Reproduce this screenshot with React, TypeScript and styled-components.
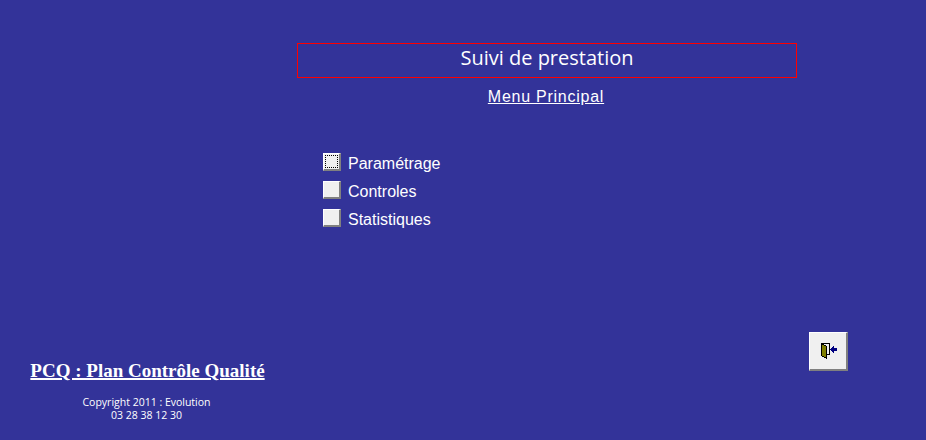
import React from "react";
import styled, { createGlobalStyle } from "styled-components";

const Global = createGlobalStyle`
  html, body { margin: 0; padding: 0; background: #333399; }
`;

const Page = styled.div`
  width: 926px;
  height: 440px;
  background: #333399;
  color: #fff;
  overflow: hidden;
  display: flex;
  flex-direction: column;
  font-family: "Liberation Sans", Arial, sans-serif;
`;

const Main = styled.div`
  flex: 1;
  padding: 43px 0 0 297px;
`;

const TitleBox = styled.div`
  box-sizing: border-box;
  width: 500px;
  height: 35px;
  padding-bottom: 6px;
  border: 1px solid #ff0000;
  display: flex;
  align-items: center;
  justify-content: center;
  font-family: "Open Sans", sans-serif;
  font-size: 20px;
  font-weight: 500;
`;

const SubTitle = styled.div`
  box-sizing: border-box;
  width: 500px;
  margin-top: 9px;
  padding-right: 2px;
  text-align: center;
  font-size: 16px;
  line-height: 19px;
  letter-spacing: 0.75px;
  text-decoration: underline;
`;

const MenuList = styled.div`
  margin: 47px 0 0 26px;
  display: flex;
  flex-direction: column;
  gap: 10px;
`;

const MenuRow = styled.div`
  display: flex;
  align-items: center;
  gap: 7px;
  height: 18px;
  font-size: 16px;
`;

const MenuLabel = styled.span`
  padding-top: 4px;
`;

const MenuButton = styled.div<{ focused?: boolean }>`
  box-sizing: border-box;
  width: 18px;
  height: 18px;
  background: #f0f0f0;
  border-style: solid;
  border-width: 1px 2px 2px 1px;
  border-color: #fff #808080 #808080 #fff;
  padding: 1px;
  &::after {
    content: "";
    display: ${p => (p.focused ? "block" : "none")};
    height: 100%;
    border: 1px dotted #000;
    box-sizing: border-box;
  }
`;

const Footer = styled.div`
  display: flex;
  justify-content: space-between;
  align-items: flex-start;
  padding: 0 78px 18px 30px;
`;

const Brand = styled.div`
  width: 235px;
  display: flex;
  flex-direction: column;
  align-items: center;
`;

const BrandName = styled.div`
  font-family: "Liberation Serif", "Times New Roman", serif;
  font-weight: bold;
  font-size: 19px;
  line-height: 20px;
  margin-top: 1px;
  text-decoration: underline;
  text-decoration-thickness: 2px;
  white-space: nowrap;
`;

const Copyright = styled.div`
  margin-top: 15px;
  margin-left: -2px;
  font-family: "Open Sans", sans-serif;
  font-size: 10.5px;
  line-height: 13px;
  text-align: center;
`;

const ExitButton = styled.div`
  box-sizing: border-box;
  width: 39px;
  height: 39px;
  margin-top: -28px;
  padding-left: 2px;
  background: #f0f0f0;
  border-style: solid;
  border-width: 1px 2px 2px 1px;
  border-color: #fff #808080 #808080 #fff;
  display: flex;
  align-items: center;
  justify-content: center;
`;

const ExitIcon = () => (
  <svg width="16" height="16" viewBox="0 0 16 16" shapeRendering="crispEdges">
    <path d="M0 0h9v12H5v-1h3V1H0z" fill="#000" />
    <path d="M0.5 0.5l5 3v12l-5-3z" fill="#808000" stroke="#000" />
    <path d="M9 6h1V5h1V4h1V3h1v2h3v3h-3v2h-1V9h-1V8h-1V7H9z" fill="#000080" />
  </svg>
);

export default function App() {
  return (
    <Page>
      <Global />
      <Main>
        <TitleBox>Suivi de prestation</TitleBox>
        <SubTitle>Menu Principal</SubTitle>
        <MenuList>
          <MenuRow><MenuButton focused /><MenuLabel>Paramétrage</MenuLabel></MenuRow>
          <MenuRow><MenuButton /><MenuLabel>Controles</MenuLabel></MenuRow>
          <MenuRow><MenuButton /><MenuLabel>Statistiques</MenuLabel></MenuRow>
        </MenuList>
      </Main>
      <Footer>
        <Brand>
          <BrandName>PCQ : Plan Contrôle Qualité</BrandName>
          <Copyright>Copyright 2011 : Evolution<br />03 28 38 12 30</Copyright>
        </Brand>
        <ExitButton><ExitIcon /></ExitButton>
      </Footer>
    </Page>
  );
}
